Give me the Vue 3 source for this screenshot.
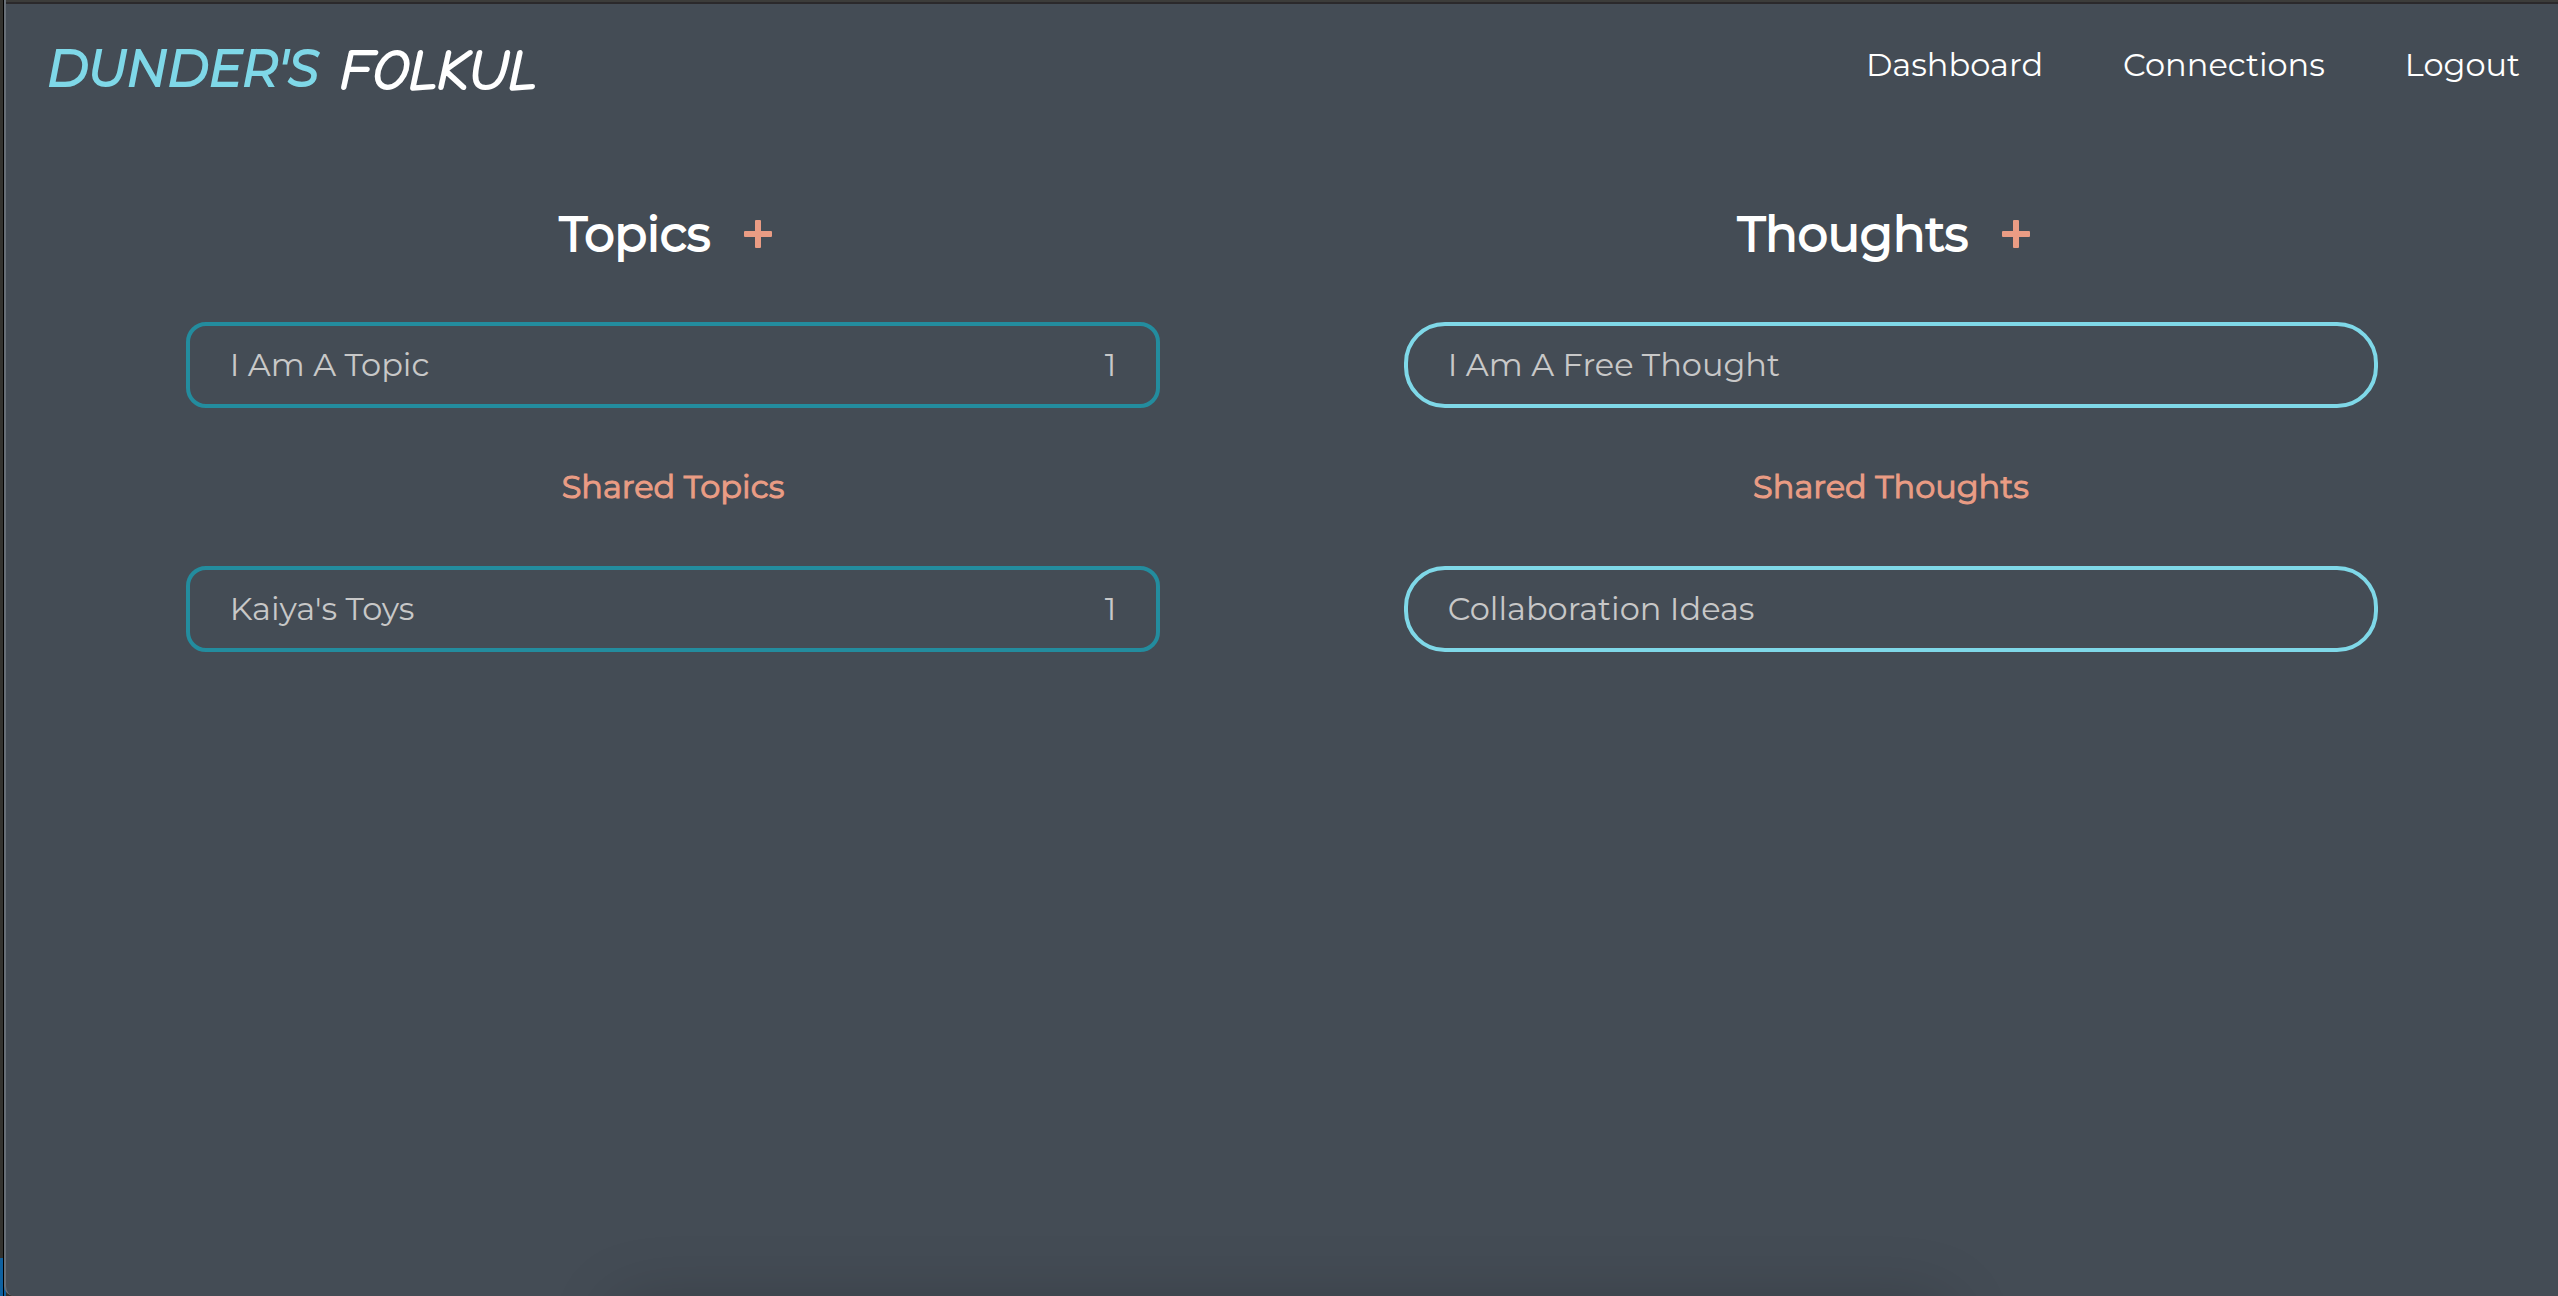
<script setup>
const links = ['Dashboard', 'Connections', 'Logout']

const columns = [
  {
    title: 'Topics',
    kind: 'topic',
    own: [{ name: 'I Am A Topic', count: 1 }],
    sharedTitle: 'Shared Topics',
    shared: [{ name: "Kaiya's Toys", count: 1 }],
  },
  {
    title: 'Thoughts',
    kind: 'thought',
    own: [{ name: 'I Am A Free Thought' }],
    sharedTitle: 'Shared Thoughts',
    shared: [{ name: 'Collaboration Ideas' }],
  },
]
</script>

<template>
  <div class="frame">
    <div class="window">
      <header class="topbar">
        <a href="#" class="logo">
          <span class="owner">DUNDER'S</span>
          <svg class="brand" width="220" height="80" viewBox="0 0 220 80">
            <text x="2" y="60">FOLKUL</text>
          </svg>
        </a>
        <nav class="nav">
          <a v-for="link in links" :key="link" href="#">{{ link }}</a>
        </nav>
      </header>

      <main class="board">
        <section v-for="col in columns" :key="col.title" class="column">
          <div class="heading">
            <h1>{{ col.title }}</h1>
            <button type="button" class="add" :aria-label="'Add to ' + col.title">
              <svg width="28" height="28" viewBox="0 0 28 28">
                <path d="M12 0h4q1 0 1 1v10h10q1 0 1 1v4q0 1-1 1h-10v10q0 1-1 1h-4q-1 0-1-1v-10h-10q-1 0-1-1v-4q0-1 1-1h10v-10q0-1 1-1z" />
              </svg>
            </button>
          </div>
          <a v-for="item in col.own" :key="item.name" href="#" class="card" :class="col.kind">
            <span>{{ item.name }}</span>
            <span v-if="item.count">{{ item.count }}</span>
          </a>
          <h2>{{ col.sharedTitle }}</h2>
          <a v-for="item in col.shared" :key="item.name" href="#" class="card" :class="col.kind">
            <span>{{ item.name }}</span>
            <span v-if="item.count">{{ item.count }}</span>
          </a>
        </section>
      </main>
    </div>
  </div>
</template>

<style>
body {
  margin: 0;
  background: #444c55;
}
</style>

<style scoped>
.frame {
  box-sizing: border-box;
  min-height: 100vh;
  display: flex;
  padding-left: 4px;
  overflow: hidden;
  background:
    linear-gradient(#000, #000) 3px 0 / 1px 100% no-repeat,
    linear-gradient(#0f61a0, #0f61a0) 0 100% / 6px 38px no-repeat,
    #34332f;
  font-family: Montserrat, Inter, "Open Sans", sans-serif;
}

.window {
  position: relative;
  flex: 1;
  min-width: 0;
  box-sizing: border-box;
  border-left: 2px solid #686f77;
  border-bottom-left-radius: 10px;
  background:
    linear-gradient(#3c3c3a 2px, #2b292b 2px) 0 0 / 100% 4px no-repeat,
    #444c55;
  overflow: hidden;
}

/* soft shade rising from the bottom edge */
.window::after {
  content: "";
  position: absolute;
  top: 100%;
  left: 24%;
  right: 24%;
  height: 80px;
  box-shadow: 0 8px 70px rgba(0, 0, 0, 0.2);
}

.topbar {
  display: flex;
  align-items: flex-start;
  justify-content: space-between;
  padding: 33px 38px 0 41px;
}

.logo {
  display: flex;
  align-items: center;
  gap: 19px;
  height: 72px;
  text-decoration: none;
}

.owner {
  color: #7fd8e8;
  font-size: 50px;
  line-height: 72px;
  font-style: italic;
  font-weight: 400;
  -webkit-text-stroke: 2px #7fd8e8;
}

.brand {
  display: block;
  overflow: visible;
}

.brand text {
  font-family: "Comic Neue", Inter, sans-serif;
  font-size: 57px;
  font-style: italic;
  font-weight: 400;
  fill: #fff;
  stroke: #fff;
  stroke-width: 2px;
  stroke-linejoin: round;
}

.nav {
  display: flex;
  gap: 80px;
  padding-top: 12px;
}

.nav a {
  color: #fff;
  font-size: 32px;
  line-height: 40px;
  text-decoration: none;
}

.board {
  display: flex;
  padding: 97px 58px 0;
}

.column {
  flex: 1;
  min-width: 0;
  display: flex;
  flex-direction: column;
  align-items: center;
}

.heading {
  display: flex;
  align-items: center;
  gap: 34px;
  padding-right: 14px;
  margin-bottom: 56px;
}

h1 {
  margin: 0;
  color: #fff;
  font-size: 48px;
  line-height: 64px;
  font-weight: 400;
  -webkit-text-stroke: 2px #fff;
}

.add {
  display: block;
  padding: 0;
  border: 0;
  background: none;
  cursor: pointer;
}

.add svg {
  display: block;
  fill: #ea9c84;
}

.card {
  box-sizing: border-box;
  width: 80%;
  display: flex;
  justify-content: space-between;
  padding: 19px 40px;
  border: 4px solid #238c9e;
  border-radius: 20px;
  color: #c8c8c8;
  font-size: 32px;
  line-height: 40px;
  font-weight: 400;
  text-decoration: none;
}

.thought {
  border-color: #7fd8e8;
  border-radius: 41px;
}

h2 {
  margin: 59px 0;
  color: #ea9c84;
  font-size: 32px;
  line-height: 40px;
  font-weight: 400;
  -webkit-text-stroke: 1px #ea9c84;
}
</style>
